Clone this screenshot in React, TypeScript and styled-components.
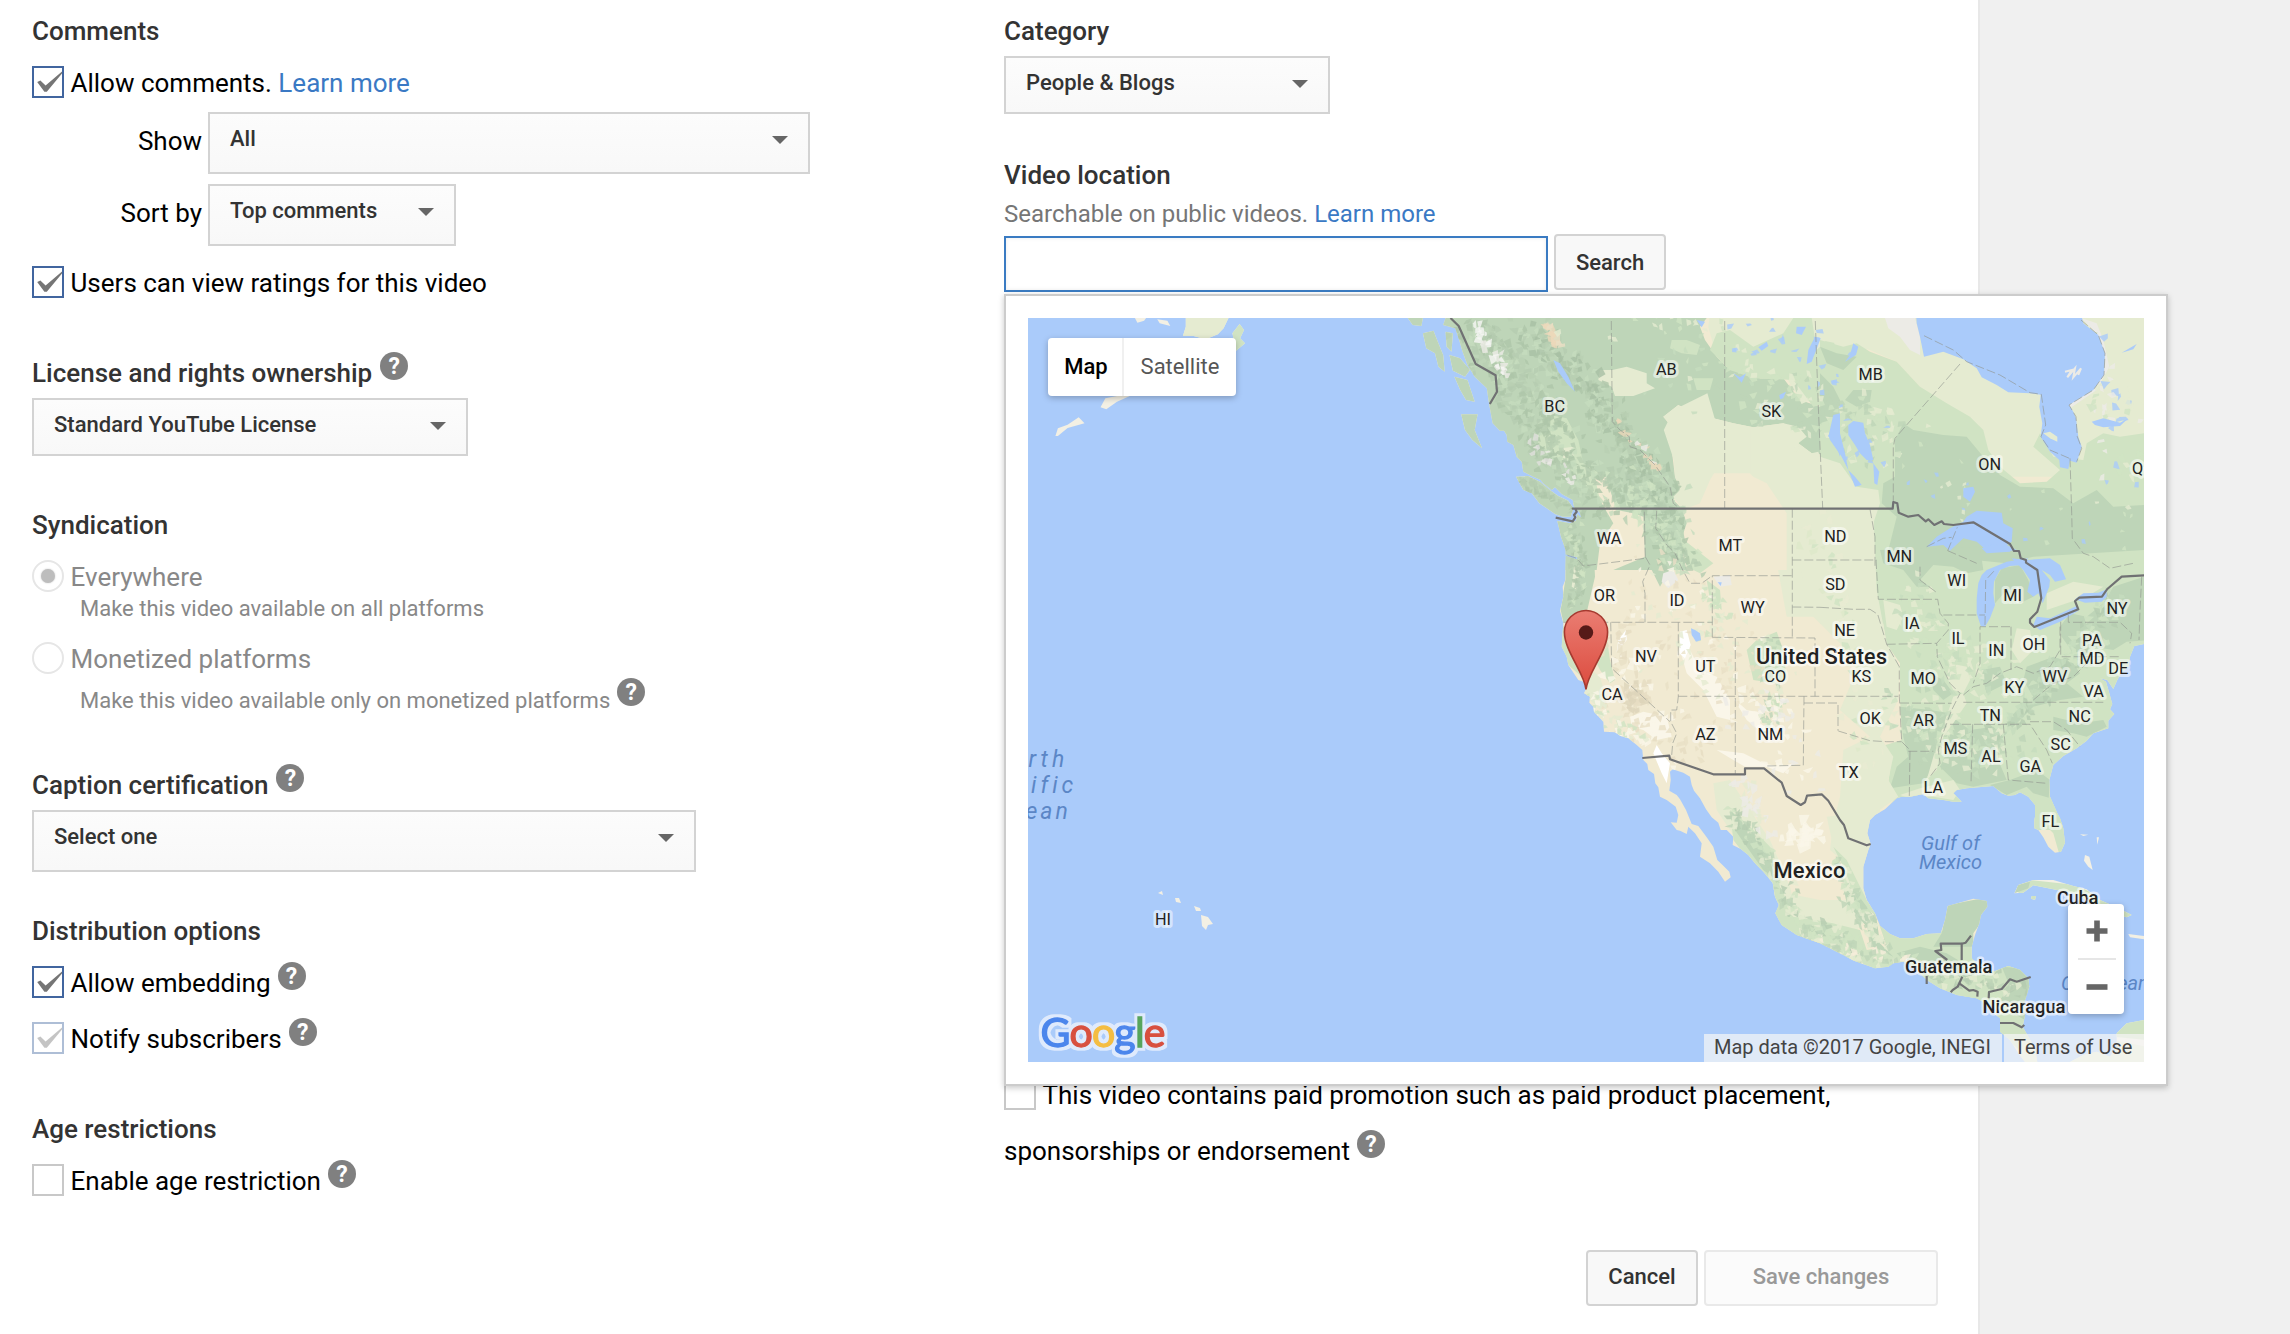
import React from "react";
import styled, { createGlobalStyle } from "styled-components";

const GlobalStyle = createGlobalStyle`
  * { box-sizing: border-box; }
  body {
    margin: 0;
    background: #f0f0f0;
    font-family: Roboto, "Liberation Sans", sans-serif;
    overflow: hidden;
  }
`;

/* ---------- page layout ---------- */

const Page = styled.main`
  display: flex;
  width: 1980px;
  height: 1334px;
  padding: 16px 0 0 32px;
  background: #fff;
  border-right: 2px solid #e8e8e8;
`;

const LeftColumn = styled.div`
  width: 972px;
  flex: none;
`;

const RightColumn = styled.div`
  width: 934px;
  flex: none;
`;

const Section = styled.section<{ $gap?: number }>`
  display: flex;
  flex-direction: column;
  margin-top: ${(p) => p.$gap ?? 0}px;
`;

const Heading = styled.h3`
  display: flex;
  height: 30px;
  margin: 0;
  color: #333;
  font-size: 26px;
  font-weight: 500;
  line-height: 30px;
  white-space: nowrap;
`;

const HelpBadge = styled.span<{ $lift?: number }>`
  flex: none;
  width: 28px;
  height: 28px;
  margin: ${(p) => -(p.$lift ?? 6)}px 0 0 ${(p) => (p.$lift ? 7 : 8)}px;
  border-radius: 50%;
  background: #808080;
  color: #fff;
  font-size: 23px;
  font-weight: 700;
  line-height: 29px;
  text-align: center;
`;

/* ---------- form controls ---------- */

const OptionRow = styled.div<{ $gap?: number; $muted?: boolean }>`
  display: flex;
  align-items: flex-start;
  height: 32px;
  margin-top: ${(p) => p.$gap ?? 20}px;
  color: ${(p) => (p.$muted ? "#888" : "#000")};
  font-size: 26px;
  line-height: 34px;
  white-space: pre;
`;

const CheckBoxFrame = styled.span<{ $checked?: boolean; $faded?: boolean }>`
  flex: none;
  width: 32px;
  height: 32px;
  margin-right: 6.5px;
  border: 2px solid ${(p) => (p.$checked ? "#41659f" : "#c8c8c8")};
  background: #fff;
  opacity: ${(p) => (p.$faded ? 0.42 : 1)};

  svg {
    display: block;
    margin: -2px;
  }
`;

const RadioFrame = styled.span`
  display: grid;
  place-items: center;
  flex: none;
  width: 32px;
  height: 32px;
  margin-right: 6.5px;
  border: 2px solid #e6e6e6;
  border-radius: 50%;
`;

const RadioDot = styled.span`
  width: 14px;
  height: 14px;
  border-radius: 50%;
  background: #bdbdbd;
  box-shadow: 0 0 2px #c8c8c8;
`;

const Hint = styled.div<{ $gap: number }>`
  display: flex;
  height: 28px;
  margin: ${(p) => p.$gap}px 0 0 48px;
  color: #888;
  font-size: 22px;
  line-height: 30px;
  white-space: nowrap;
`;

const FieldRow = styled.div<{ $gap: number }>`
  display: flex;
  margin-top: ${(p) => p.$gap}px;
`;

const FieldLabel = styled.label`
  width: 170px;
  margin-right: 6px;
  color: #000;
  font-size: 26px;
  line-height: 58px;
  text-align: right;
`;

const SelectBox = styled.div<{ $width: number; $height?: number; $gap?: number }>`
  display: flex;
  justify-content: space-between;
  width: ${(p) => p.$width}px;
  height: ${(p) => p.$height ?? 58}px;
  margin-top: ${(p) => p.$gap ?? 0}px;
  padding: 10px 20px 0;
  border: 2px solid #d3d3d3;
  background: linear-gradient(#fcfcfc, #f8f8f8);
  color: #333;
  font-size: 22px;
  font-weight: 500;
  line-height: 29px;
`;

const Caret = styled.span`
  width: 16px;
  height: 8px;
  margin-top: 12px;
  background: #666;
  clip-path: polygon(0 0, 100% 0, 50% 100%);
`;

const Link = styled.a`
  color: #3a79c4;
`;

const Note = styled.p`
  height: 30px;
  margin: 9px 0 0;
  color: #767676;
  font-size: 24px;
  line-height: 30px;
  white-space: pre;
`;

const SearchRow = styled.div`
  position: relative;
  display: flex;
  gap: 6px;
  height: 58px;
  margin-top: 5px;
`;

const SearchInput = styled.input`
  width: 544px;
  height: 56px;
  margin: 2px 0 0;
  padding: 0 12px;
  border: 2px solid #3a7bc2;
  border-radius: 0;
  background: #fff;
  box-shadow: inset 0 0 4px rgba(0, 0, 0, 0.08);
  font: 24px Roboto, sans-serif;
  outline: none;
`;

const Button = styled.button<{ $width: number; $low?: boolean }>`
  width: ${(p) => p.$width}px;
  height: 56px;
  padding: ${(p) => (p.$low ? "2px 0 0" : "0 0 2px")};
  border: 2px solid #d3d3d3;
  border-radius: 4px;
  background: #f8f8f8;
  color: #333;
  font: 500 22px/48px Roboto, sans-serif;

  &:disabled {
    border-color: #e9e9e9;
    background: #fbfbfb;
    color: #999;
  }
`;

const Footer = styled.footer`
  display: flex;
  justify-content: flex-end;
  gap: 6px;
  margin-top: 84px;
`;

/* ---------- map popup ---------- */

const MapPopup = styled.div`
  position: absolute;
  top: 60px;
  left: 0;
  width: 1164px;
  height: 792px;
  padding: 22px;
  border: 2px solid #ccc;
  background: #fff;
  box-shadow: 0 2px 6px rgba(0, 0, 0, 0.22);
`;

const MapCanvas = styled.div`
  position: relative;
  width: 1116px;
  height: 744px;
  overflow: hidden;

  > svg {
    display: block;
  }
`;

const MapTypeBar = styled.div`
  position: absolute;
  top: 20px;
  left: 20px;
  display: flex;
  width: 188px;
  height: 58px;
  border-radius: 4px;
  background: #fff;
  box-shadow: 0 2px 6px rgba(0, 0, 0, 0.25);
  font-size: 22px;
  line-height: 57px;
`;

const MapType = styled.span<{ $active?: boolean }>`
  width: ${(p) => (p.$active ? 76 : 112)}px;
  padding-left: ${(p) => (p.$active ? 2 : 0)}px;
  border-right: ${(p) => (p.$active ? "2px solid #f0f0f0" : "none")};
  color: ${(p) => (p.$active ? "#000" : "#565656")};
  font-weight: ${(p) => (p.$active ? 500 : 400)};
  text-align: center;
`;

const ZoomBar = styled.div`
  position: absolute;
  right: 20px;
  bottom: 48px;
  display: flex;
  flex-direction: column;
  align-items: center;
  width: 56px;
  height: 110px;
  padding-left: 2px;
  border-radius: 4px;
  background: #fff;
  box-shadow: 0 2px 6px rgba(0, 0, 0, 0.25);
`;

const ZoomStep = styled.span`
  display: grid;
  place-items: center;
  width: 100%;
  height: 54px;
`;

const ZoomDivider = styled.span`
  width: 38px;
  height: 2px;
  background: #e6e6e6;
`;

const Attribution = styled.div`
  position: absolute;
  right: 0;
  bottom: 0;
  display: flex;
  gap: 2px;
  height: 28px;
  color: #444;
  font-size: 20px;
  line-height: 26px;
  white-space: nowrap;
`;

const Credit = styled.span<{ $width: number }>`
  width: ${(p) => p.$width}px;
  padding-left: 10px;
  background: rgba(245, 245, 245, 0.72);
`;

/* ---------- map geometry ---------- */

type Tile = [number, number, number, number];

/* Survey tiles: origin on the page and units per pixel on each axis. */
const NW: Tile = [990, 0, 2.063, 3];
const T1: Tile = [1500, 290, 3, 3];
const T2: Tile = [1820, 290, 3, 3];
const T3: Tile = [1500, 550, 3, 3];
const T4: Tile = [1820, 550, 3, 3];
const T5: Tile = [1700, 800, 3, 3];
const T6: Tile = [1680, 700, 3, 3];

const at = ([ox, oy, sx, sy]: Tile, src: string) =>
  src
    .trim()
    .split(/\s+/)
    .map((pair) => {
      const [x, y] = pair.split(",").map(Number);
      return `${(ox + x / sx).toFixed(1)},${(oy + y / sy).toFixed(1)}`;
    })
    .join(" ");

const MAINLAND = [
  at(NW, "940,954 935,975 960,985 968,1020 975,1055 985,1095 1000,1130 1025,1165 1030,1215 1037,1270 1052,1292"),
  at(T1, "12,422 20,435 22,455 40,465 50,500 65,515 70,545 100,560 122,570 130,580 155,600 165,592 185,612 218,630 222,650 240,668 248,700 246,740 255,745 258,710 250,690 232,672 228,692 210,700 172,693 183,740 197,780 198,840"),
  at(T3, "198,0 196,90 188,110 190,140 180,182 190,220 185,290 200,320 205,345 235,390 250,395 258,418 252,430 270,440 268,458 280,470 282,485 310,515 312,545 345,547 362,558 385,565 410,585 427,600 430,630 442,642 445,660 462,672 466,700 475,712 480,740 500,750 527,770 535,795 530,818 512,817 530,840"),
  at(T6, "0,392 20,402 25,380 45,400 65,430 60,470 90,490 115,515 135,545 152,532 148,515 130,497 112,480 100,440 80,412 55,378 35,372 18,330 0,298"),
  at(T3, "540,748 530,735 508,722 512,690 510,665 518,658 550,668 570,680 575,705 582,722 600,745 618,778 635,802 655,818 662,840"),
  at(T6, "122,390 140,390 160,410 158,435 182,447 205,465 225,490 250,515 278,548 285,590 297,615 286,640 305,675 350,705 420,730 490,765 522,782 585,805 625,800 640,790 670,785 700,800 740,840 780,865 830,885 890,895"),
  at(T5, "845,603 870,630 900,655 900,695 930,720 955,760 975,786 1012,786 1005,745 985,710 968,680 975,645 975,600 988,560 985,535 960,510 925,498 880,515 840,500 815,475 815,440 825,405 838,370 843,345 862,320 860,303 820,296 775,309 743,318 735,360 722,400 680,402 640,415 600,415 570,402 540,377 525,340 500,300 490,265 490,200 505,150 512,132"),
  at(T6, "562,400 570,360 585,345 615,328 650,295 665,290 690,290 730,282 745,295 790,300 820,305 845,305 820,280 830,270 860,265 895,262 940,258 965,280 985,287 1005,285"),
  at(T4, "600,727 625,740 645,765 645,800"),
  at(T5, "1003,60 1003,85 1015,90 1030,112 1045,140 1065,158 1083,155 1095,128 1090,85 1080,55"),
  at(T4, "712,790 690,740 688,690 700,645 730,618 770,595 800,572 820,550 865,535 865,512 883,492 870,478 877,462 868,430 858,395 840,385 862,390 880,417 892,390 903,370 925,350 930,320 943,288 972,282"),
  at(T2, "990,780 990,60"),
].join(" ");

const ISLANDS = [
  at(NW, "862,954 893,954 890,978 872,975"),
  at(NW, "893,1000 915,992 925,1030 935,1065 938,1115 925,1100 918,1060 900,1045"),
  at(NW, "940,995 955,1000 952,1055 942,1040"),
  at(NW, "948,1065 970,1075 990,1110 980,1130 955,1112"),
  at(NW, "958,1130 985,1140 1000,1205 982,1200 970,1170"),
  at(NW, "972,1243 1006,1243 1000,1290 1015,1345 995,1320 980,1290"),
  at(T1, "48,560 85,558 120,575 150,600 175,618 205,632 220,655 212,680 188,680 165,672 140,655 118,640 95,610 70,600"),
  at(T5, "943,280 955,255 1000,240 1060,240 1120,258 1160,268 1200,300 1250,322 1295,345 1280,352 1220,335 1170,305 1120,280 1060,268 1000,256 970,278"),
  at(T5, "1250,700 1280,670 1332,660 1345,786 1110,786 1150,765 1190,755 1230,770 1250,740"),
  at(T5, "1285,402 1332,408 1332,418 1290,412"),
  at(T5, "995,288 1008,288 1005,300 993,296"),
  at(T5, "1155,165 1168,170 1178,210 1165,200 1152,182"),
  at(T5, "1190,112 1197,112 1192,134"),
  at(T5, "1140,103 1165,104 1150,108"),
  at(NW, "404,954 492,954 482,985 470,1003 445,1018 420,1008 398,1008 404,980"),
  at(NW, "500,1000 515,972 524,990 516,1015 526,1030 508,1052"),
  at(NW, "299,954 322,954 318,962 304,968"),
  at(NW, "345,958 366,962 372,978 350,970"),
  at(NW, "228,1222 238,1195 262,1188 292,1186 262,1205 240,1228"),
  at(NW, "135,1308 140,1285 160,1274 183,1252 195,1270 160,1284 140,1308"),
  "1158,893 1162,891 1163,895",
  "1175,898 1179,898 1181,903 1176,902",
  "1194,906 1200,908 1201,911 1196,911",
  "1201,915 1208,917 1213,924 1208,925 1206,930 1202,926",
];

const CREAM = "#f1ead2";
const PALE = "#e5ebd1";
const MID = "#d0e3c3";
const DEEP = "#bed5b8";
const RIDGE = "#aec5a9";
const SNOW = "#ecebe6";
const SAND = "#faf6e9";

const TERRAIN: [string, string][] = [
  [DEEP, at(T1, "-700,0 640,0 620,84 600,110 615,150 650,200 680,230 730,250 780,265 850,265 900,330 960,350 1020,350 1020,500 935,490 895,460 910,430 850,400 760,412 700,400 640,385 590,370 535,345 490,380 530,430 515,480 525,560 540,600 520,630 545,655 560,700 540,760 560,840 200,840 -700,840")],
  [PALE, at(T1, "640,0 1100,0 1100,84 1020,260 950,340 900,330 860,265 780,265 740,245 690,240 640,165 625,110")],
  [MID, at(T1, "690,120 760,170 850,130 880,84 935,84 950,180 1000,130 1020,330 940,350 880,270 760,265 690,240 630,180 650,130")],
  [PALE, at(T1, "490,380 535,345 560,365 600,370 640,385 700,400 760,412 850,400 895,410 920,440 895,460 935,490 955,485 970,530 1000,540 1060,530 1100,800 1100,980 860,980 800,655 545,655 520,620 540,600 525,560 520,490 535,430")],
  [PALE, at(T1, "337,240 380,230 440,250 440,280 465,295 400,318 345,318 335,290 295,270 300,240")],
  [MID, at(T1, "515,150 560,150 600,165 590,195 545,190 510,175")],
  [MID, at(T1, "580,265 640,265 630,300 590,300")],
  [MID, at(T1, "110,400 150,375 200,385 235,450 250,520 290,545 330,570 320,640 270,600 220,545 160,500 115,460")],
  [PALE, at(T1, "185,475 220,470 220,500 190,505")],
  [CREAM, at(T1, "600,640 630,570 660,520 720,520 760,560 800,580 840,640 860,670 860,840 560,840 570,700 550,660")],
  [CREAM, at(T1, "285,565 320,560 330,600 350,660 400,670 430,680 435,800 340,840 290,840 300,760 340,700 300,630")],
  [PALE, at(T2, "-20,60 972,60 972,460 850,470 780,520 700,560 560,560 500,480 430,400 300,290 230,215 150,180 0,150")],
  [SNOW, at(T2, "195,84 285,84 300,140 300,195 270,180 240,140 205,115")],
  [SNOW, at(T2, "783,84 830,100 850,150 868,230 830,300 750,355 745,345 820,300 852,255 855,190 835,135")],
  [MID, at(T2, "0,150 70,170 110,160 150,185 230,215 300,290 380,340 450,380 490,420 505,480 540,530 600,580 680,575 720,540 640,470 660,430 700,500 790,510 800,460 850,430 900,440 972,430 990,1000 0,1000")],
  [PALE, at(T2, "0,500 60,520 110,590 175,600 180,640 160,700 150,740 0,1000")],
  [DEEP, at(T2, "0,250 40,290 60,330 60,380 0,400")],
  [DEEP, at(T2, "100,300 155,300 150,335 110,350 75,330")],
  [DEEP, at(T2, "0,170 50,190 110,200 70,240 20,220")],
  [DEEP, at(T2, "225,450 250,400 280,420 370,435 440,440 490,500 540,555 600,590 700,595 760,640 830,600 880,650 972,645 990,880 820,880 650,800 560,880 320,840 200,800 230,680 185,640 190,580 225,560")],
  [MID, at(T4, "165,0 560,40 640,20 972,0 1000,300 1000,840 150,840 180,800 230,740 205,700 215,620 180,590 245,570 240,440 240,340 200,283 178,150")],
  [DEEP, at(T4, "180,0 480,-10 490,60 440,70 400,50 340,45 300,90 330,110 290,110 250,60 190,40")],
  [DEEP, at(T4, "545,55 600,45 625,90 640,140 600,160 560,120 525,160 525,90")],
  [PALE, at(T4, "190,150 240,165 250,200 230,240 200,230")],
  [PALE, at(T4, "590,235 630,240 640,300 600,340 575,300")],
  [PALE, at(T4, "390,340 440,350 450,390 430,430 400,420 380,380")],
  [PALE, at(T4, "680,130 760,95 850,110 800,140 740,160 680,180")],
  [DEEP, at(T4, "720,230 750,190 800,200 850,160 880,110 972,80 990,270 920,275 880,300 820,290 760,310 725,260")],
  [DEEP, at(T4, "620,350 700,320 760,340 780,370 740,400 790,440 720,450 640,470 580,530 550,560 570,500 640,440 610,390")],
  [DEEP, at(T4, "240,470 330,480 390,490 380,560 350,560 345,640 310,700 210,715 230,650 265,620 250,560")],
  [DEEP, at(T4, "395,500 450,540 520,530 550,560 530,620 560,690 460,710 410,700 360,650 385,600")],
  [DEEP, at(T4, "330,370 370,390 400,430 370,450 340,420")],
  [DEEP, at(T4, "480,360 540,350 560,400 500,430")],
  [DEEP, at(T4, "700,500 780,520 850,510 860,530 800,560 760,550 700,540")],
  [DEEP, at(T4, "570,690 650,660 690,690 685,760 660,750 620,710 560,735 510,705")],
  [PALE, at(T4, "400,440 430,430 440,460 400,520 370,560 350,660 320,690 340,620 365,540")],
  [PALE, at(T4, "240,735 300,715 400,690 420,720 400,750 340,740 260,742")],
  [PALE, at(T4, "-80,-120 160,-120 170,120 200,280 240,350 235,450 180,560 220,620 205,690 235,740 150,800 100,960 30,900 40,820 60,740 70,600 150,560 60,480 110,360 60,280 -40,180")],
  [DEEP, at(T3, "195,-30 280,-30 285,80 262,180 275,217 190,217 182,180 196,90")],
  [PALE, at(T3, "222,50 240,45 232,120 215,110")],
  [DEEP, at(T3, "440,-110 540,-110 560,0 520,40 480,110 455,60 440,0")],
  [MID, at(T3, "540,-40 590,0 640,40 600,70 560,50")],
  [MID, at(T3, "185,225 220,250 250,320 245,380 205,345 185,290")],
  [MID, at(T3, "275,245 320,260 330,330 345,390 330,400 300,360 270,300")],
  [PALE, at(T3, "250,340 300,380 320,450 300,480 260,440")],
  [SAND, at(T3, "390,500 430,485 500,500 515,560 470,570 430,540 395,530")],
  [SAND, at(T3, "560,250 570,300 600,360 650,380 690,450 690,510 650,500 610,420 560,370 540,300")],
  [SAND, at(T3, "700,445 740,480 790,490 780,520 840,560 800,560 740,510")],
  [SAND, at(T3, "650,600 730,610 790,640 840,650 880,640 850,670 800,650 735,650 700,630")],
  ["#fff", at(T3, "470,585 485,610 510,640 500,700 485,670 460,610")],
  ["#fff", at(T3, "378,240 380,270 350,305 355,270")],
  ["#fff", at(T3, "540,245 560,240 572,285 555,325 538,310")],
  [MID, at(T3, "770,270 830,245 850,300 860,390 820,400 760,390 740,300")],
  [MID, at(T3, "620,90 660,120 665,180 630,150")],
  [SNOW, at(T3, "490,70 520,60 535,90 505,115 485,95")],
  [SNOW, at(T3, "640,80 690,75 695,105 660,110")],
  [PALE, at(T6, "100,250 150,240 210,330 270,420 330,560 340,600 300,640 260,520 170,420 110,330")],
  [MID, at(T6, "150,330 200,370 270,440 300,560 340,640 300,700 280,560 230,510 160,420")],
  [DEEP, at(T6, "155,335 190,370 240,420 275,500 290,540 250,510 200,440 165,390")],
  [PALE, at(T6, "440,350 600,330 570,640 520,620 490,560 500,480 460,440")],
  [PALE, at(T6, "320,580 420,600 500,600 560,660 520,700 340,680")],
  [MID, at(T6, "290,600 340,650 440,665 540,690 560,750 620,740 590,650 530,600 490,500 460,440 500,480 560,600 620,680 720,700 780,690 1020,800 1020,900 800,900 600,830 400,760 280,680")],
  [DEEP, at(T6, "490,560 530,580 590,660 600,730 640,770 580,740 560,680 500,610")],
  [DEEP, at(T6, "650,760 720,740 800,760 850,790 860,830 760,840 690,800")],
  [DEEP, at(T5, "743,315 870,290 870,330 820,400 820,440 700,440 725,400")],
  [MID, at(T5, "820,480 1000,490 1000,786 900,700 850,610 780,590")],
  [DEEP, at(T5, "905,500 960,505 990,540 975,660 940,640 900,600 930,560")],
  [MID, at(T5, "940,235 1130,255 1300,345 1280,360 960,290")],
  [DEEP, at(T5, "943,280 955,255 990,245 985,265")],
  [PALE, at(T5, "960,720 1020,720 1030,790 960,790")],
  [MID, at(T5, "1200,650 1340,650 1340,720 1240,710")],
  [PALE, at(T5, "1100,740 1240,720 1340,740 1340,790 1100,790")],
  [MID, at(T5, "1000,-20 1070,0 1100,130 1080,170 1060,100 1020,60")],
  [PALE, at(NW, "390,940 500,940 490,1020 395,1030")],
  [MID, at(NW, "500,960 530,960 530,1060 500,1060")],
  [PALE, at(NW, "1410,1230 1480,1180 1500,1280 1568,1290 1568,1420 1420,1420 1390,1290")],
];

/* Small deterministic generator for the relief texture. */
const makeRandom = (seed: number) => () => {
  seed = (seed * 16807) % 2147483647;
  return seed / 2147483647;
};

type Relief = { spine: [number, number][]; spread: number; count: number; size: number; tones: string[] };

const RELIEF: Relief[] = [
  { spine: [[1475, 330], [1510, 370], [1535, 420], [1560, 460], [1610, 500]], spread: 34, count: 420, size: 6, tones: [RIDGE, RIDGE, "#b5ccb0", "#b9d0b3", "#c6dcbe"] },
  { spine: [[1530, 330], [1590, 390], [1640, 460], [1670, 510]], spread: 22, count: 360, size: 6, tones: [RIDGE, "#b5ccb0", "#a8bfa4", "#b9d0b3", "#c6dcbe"] },
  { spine: [[1475, 325], [1490, 350], [1505, 375]], spread: 8, count: 26, size: 6, tones: [SNOW, "#f6f6f4"] },
  { spine: [[1530, 440], [1550, 465], [1575, 480]], spread: 8, count: 18, size: 5, tones: [SNOW, "#e0e0dc"] },
  { spine: [[1545, 325], [1560, 345]], spread: 5, count: 16, size: 7, tones: ["#ecd8ba", "#eadfc4"] },
  { spine: [[1615, 420], [1640, 445], [1660, 470]], spread: 5, count: 16, size: 5, tones: ["#ecd8ba", SNOW, "#f3efe4"] },
  { spine: [[1620, 480], [1660, 520], [1685, 570]], spread: 28, count: 190, size: 6, tones: [RIDGE, MID, "#c6dcbe", "#b5ccb0"] },
  { spine: [[1575, 520], [1578, 560], [1575, 610]], spread: 12, count: 80, size: 5, tones: [RIDGE, "#b5ccb0", MID] },
  { spine: [[1520, 480], [1545, 495], [1570, 508]], spread: 6, count: 36, size: 5, tones: [RIDGE, "#b5ccb0"] },
  { spine: [[1600, 320], [1720, 330], [1690, 390]], spread: 60, count: 50, size: 5, tones: [MID, PALE, "#c6dcbe"] },
  { spine: [[1750, 380], [1840, 420], [1900, 440]], spread: 44, count: 120, size: 6, tones: [MID, DEEP, PALE] },
  { spine: [[1740, 330], [1830, 350], [1860, 470]], spread: 40, count: 34, size: 5, tones: ["#a9cbfa"] },
  { spine: [[1900, 460], [2000, 510], [2130, 530]], spread: 44, count: 36, size: 4, tones: ["#a9cbfa", MID, PALE] },
  { spine: [[2070, 330], [2110, 400], [2130, 480]], spread: 30, count: 60, size: 6, tones: [MID, PALE, "#a9cbfa", SNOW] },
  { spine: [[1640, 590], [1700, 640], [1760, 690]], spread: 60, count: 150, size: 5, tones: [PALE, "#ebe2c8", SAND, "#e9dfc6"] },
  { spine: [[1620, 640], [1640, 720], [1700, 740]], spread: 40, count: 110, size: 6, tones: ["#e9e0c6", SAND, "#e6dcc2"] },
  { spine: [[1770, 640], [1775, 700], [1765, 730]], spread: 12, count: 70, size: 5, tones: [MID, PALE, DEEP] },
  { spine: [[1710, 580], [1720, 620], [1690, 640]], spread: 14, count: 36, size: 5, tones: [MID, PALE] },
  { spine: [[1630, 690], [1640, 700]], spread: 14, count: 40, size: 6, tones: ["#ddd5ba", "#e6dcc2"] },
  { spine: [[1740, 700], [1780, 720], [1800, 770]], spread: 30, count: 60, size: 6, tones: [SAND, SNOW] },
  { spine: [[1730, 810], [1770, 860], [1800, 920], [1850, 940]], spread: 12, count: 130, size: 6, tones: [DEEP, MID, "#b5ccb0", PALE] },
  { spine: [[1740, 780], [1770, 840]], spread: 12, count: 34, size: 7, tones: [SNOW, PALE] },
  { spine: [[1790, 830], [1820, 840]], spread: 14, count: 24, size: 9, tones: [SAND] },
  { spine: [[1840, 860], [1850, 900], [1880, 940]], spread: 12, count: 80, size: 6, tones: [DEEP, MID, PALE] },
  { spine: [[1800, 935], [1850, 955], [1920, 965]], spread: 16, count: 120, size: 6, tones: [DEEP, MID, PALE, "#f6eedb"] },
  { spine: [[2000, 730], [2040, 690], [2080, 650], [2110, 600]], spread: 20, count: 150, size: 6, tones: ["#b5ccb0", MID, "#c6dcbe"] },
  { spine: [[1900, 700], [1950, 750], [2010, 740]], spread: 36, count: 150, size: 6, tones: [DEEP, MID, PALE, "#c6dcbe"] },
  { spine: [[1910, 580], [1940, 660], [2000, 670]], spread: 34, count: 110, size: 6, tones: [MID, PALE, "#c6dcbe"] },
  { spine: [[1930, 975], [1990, 980], [2020, 990]], spread: 14, count: 60, size: 6, tones: [DEEP, PALE, "#b5ccb0"] },
  { spine: [[1810, 530], [1850, 620], [1870, 760]], spread: 28, count: 60, size: 6, tones: [MID, "#dde8c9", "#e9ebd2"] },
  { spine: [[1585, 690], [1610, 720], [1640, 745]], spread: 12, count: 60, size: 5, tones: [MID, SAND, PALE] },
];

const shards = RELIEF.flatMap((band, bandIndex) => {
  const random = makeRandom(bandIndex * 977 + 41);
  return Array.from({ length: band.count }, () => {
    const t = random() * (band.spine.length - 1);
    const i = Math.floor(t);
    const [ax, ay] = band.spine[i];
    const [bx, by] = band.spine[i + 1];
    const cx = ax + (bx - ax) * (t - i) + (random() + random() - 1) * band.spread;
    const cy = ay + (by - ay) * (t - i) + (random() + random() - 1) * band.spread;
    const points = Array.from({ length: 4 }, (_, k) => {
      const angle = (k / 4) * Math.PI * 2 + random() * 1.3;
      const r = band.size * (0.25 + random() * 0.75);
      return `${(cx + Math.cos(angle) * r).toFixed(1)},${(cy + Math.sin(angle) * r).toFixed(1)}`;
    }).join(" ");
    return { points, fill: band.tones[Math.floor(random() * band.tones.length)] };
  });
});

const LAKES = [
  at(T2, "288,70 290,100 300,140 312,200 370,185 430,208 470,235 485,262 530,285 565,307 630,310 662,314 658,350 667,400 662,440 690,485 718,510 720,532 745,537 750,512 770,518 785,470 775,440 768,385 760,365 747,345 820,300 852,255 855,190 835,135 790,100 783,70"),
  at(T2, "85,405 100,393 130,398 135,430 150,465 160,510 140,510 120,490 105,465 85,435"),
  at(T2, "25,435 60,430 75,490 85,540 105,560 125,585 105,590 85,540 65,500 30,450"),
  at(T2, "160,520 178,545 172,585 163,580"),
  at(T2, "100,160 115,170 108,195 75,215 90,195"),
  at(T2, "430,595 460,590 465,605 450,635 430,620"),
  at(T2, "320,770 350,740 390,715 430,695 440,680 470,662 545,668 550,700 578,715 575,755 560,765 600,785 545,778 505,785 470,755 430,745 390,782 370,765"),
  at(T2, "815,395 850,385 900,398 925,385 900,408 850,412 825,405"),
  at(T2, "905,188 950,162 940,178"),
  at(T1, "160,210 180,220 205,260 225,305 200,280 175,245"),
  at(T1, "925,180 945,140 962,145 935,215 920,222"),
  at(T1, "890,110 918,110 905,135 888,130"),
  at(T1, "775,172 800,155 805,168 785,182"),
  at(T1, "700,250 720,262 738,250 725,278"),
  at(T1, "590,90 615,95 605,112"),
  at(T1, "838,315 858,305 850,325 840,328"),
  at(T1, "1000,375 1020,370 1020,500 1000,440 985,440"),
  at(T4, "470,145 475,100 485,75 500,60 560,35 625,25 610,45 570,48 540,60 522,95 520,130 525,165 510,205 495,230 482,228 470,190"),
  at(T4, "485,-5 520,-18 575,-5 570,5 500,10"),
  at(T4, "575,25 620,30 690,25 720,45 738,88 705,95 690,75 665,60 690,90 688,110 668,160 655,130 640,140 622,125 630,90 610,60"),
  at(T4, "640,225 650,200 690,205 770,168 775,182 720,215 660,240"),
  at(T4, "765,148 790,130 835,128 860,118 860,140 845,155 795,158"),
  at(T3, "573,235 585,240 600,250 603,270 588,275 575,255"),
  at(T3, "653,97 665,97 662,108"),
  at(T3, "190,12 230,22 232,28 200,18"),
  at(T5, "860,605 900,635 895,645 870,625"),
];

const BORDERS = [
  at(NW, "950,954 967,978 1002,1092 1043,1126 1046,1175 1031,1212"),
  `${at(T1, "167,683 218,694 226,682 222,675 230,665 226,656 218,656 1020,656")} ${at(T2, "218,656 220,636 232,640 236,668 265,680 295,675 317,694 325,688 343,705 365,694 372,702 400,705 460,697 570,762 582,783 597,783 602,805 618,810 618,818")} ${at(T4, "652,60 664,145 652,185 630,208 630,218 643,231 775,178 765,153 778,143 846,140 862,117 905,80 980,76")}`,
  `${at(T3, "427,624 508,617 510,628 640,673 735,673 735,655 792,655 845,698 860,738 902,765 915,757 921,737 965,733")} ${at(T6, "445,302 480,360 492,375 505,415 560,436 572,432")}`,
  at(T5, "742,480 706,453 724,450 722,431 785,431 785,480"),
  at(T5, "785,431 797,428 813,407"),
  at(T5, "680,528 680,552"),
  at(T5, "752,577 758,570 773,560 778,550 787,530"),
  at(T5, "778,550 808,572 820,570 833,575 832,590"),
  at(T5, "866,595 867,576 905,567 930,538 950,545 992,531"),
  at(T5, "900,669 940,669 965,682 973,675"),
];

const STATE_LINES = [
  at(T1, "334,93 337,395 360,420 388,440 390,470 420,480 465,525 510,590 520,640 540,656"),
  at(T1, "674,93 674,655"),
  at(T1, "946,93 955,350 968,655"),
  at(T1, "877,656 877,1040"),
  at(T1, "433,665 436,805 250,828 230,805 200,795"),
  at(T1, "470,662 467,715 500,765 525,790 548,840 570,880 605,880 637,857"),
  at(T2, "312,137 400,180 440,215 540,255 630,308 664,313 677,405 663,440 690,480 748,505"),
  at(T2, "783,90 835,135 855,190 852,255 820,300 747,345 768,380 772,440 785,475 770,515"),
  at(T2, "420,222 225,445 220,470 220,640"),
  at(T2, "750,505 755,670 757,745 790,790 820,800 870,835 940,820"),
  at(T2, "150,658 165,740 165,830"),
  at(T2, "320,770 370,745 395,742"),
  at(T2, "383,782 412,712"),
  at(T2, "383,782 470,820"),
  at(T3, "877,30 1130,30"),
  at(T3, "637,262 637,77 877,77"),
  at(T3, "637,262 945,264 945,439"),
  at(T3, "436,20 450,45 428,95 435,130 435,217"),
  at(T3, "190,217 637,217"),
  at(T3, "535,217 535,440 530,480 512,480 512,515 530,550 518,580 515,615"),
  at(T3, "332,217 335,355 510,515"),
  at(T3, "535,439 1195,439"),
  at(T3, "706,264 706,672"),
  at(T3, "912,439 910,646 795,648"),
  at(T3, "912,459 1014,459 1014,542"),
  at(T3, "877,171 960,172"),
  at(T4, "0,172 100,178 150,178 173,193 200,283 238,350 238,439 245,575 270,600 268,740"),
  at(T4, "55,543 150,572 200,575 245,575"),
  at(T4, "168,30 175,148 353,148 360,190 385,220 385,240 350,280 352,320 390,400 420,430 395,480 365,560 355,600 360,640 330,680"),
  at(T4, "200,283 350,280"),
  at(T4, "240,459 395,460"),
  at(T4, "265,604 340,604"),
  at(T4, "370,195 495,195"),
  at(T4, "570,230 480,230 480,340 460,400"),
  at(T4, "573,230 573,360"),
  at(T4, "720,230 720,300 690,350 640,370 590,350 540,370 500,400 460,410 430,435"),
  at(T4, "430,457 850,457"),
  at(T4, "390,523 630,523 680,600 697,640"),
  at(T4, "458,523 453,700"),
  at(T4, "550,523 565,690 680,700"),
  at(T4, "630,515 700,515 740,540 780,590"),
  at(T4, "722,215 722,320 900,320"),
  at(T4, "745,195 745,217 900,217 935,250 930,280"),
  at(T4, "965,80 960,180 957,270"),
  at(T4, "640,450 700,400 760,380 800,340"),
  at(T4, "300,50 300,90 353,130"),
  at(T4, "495,225 497,90 525,60"),
];

type StateLabel = [string, number, number];

const label = (tile: Tile, items: StateLabel[]): StateLabel[] =>
  items.map(([text, x, y]) => [text, tile[0] + x / tile[2], tile[1] + y / tile[3]]);

const STATES: StateLabel[] = [
  ...label(T1, [["BC", 164, 366], ["AB", 499, 256], ["SK", 814, 381], ["WA", 327, 762], ["MT", 691, 783]]),
  ...label(T2, [["MB", 152, 270], ["ON", 509, 540], ["Q", 953, 552], ["ND", 46, 756], ["MN", 238, 815]]),
  ...label(T3, [["OR", 313, 152], ["ID", 531, 168], ["WY", 758, 189], ["NV", 438, 336], ["UT", 616, 366], ["CO", 826, 396], ["CA", 336, 450], ["AZ", 616, 570], ["NM", 811, 570]]),
  ...label(T4, [
    ["SD", 46, 120], ["NE", 74, 258], ["KS", 124, 396], ["TX", 86, 684], ["OK", 151, 521], ["AR", 311, 528], ["LA", 340, 729],
    ["MS", 406, 612], ["AL", 513, 636], ["GA", 631, 666], ["SC", 722, 599], ["NC", 779, 515], ["VA", 821, 441], ["DE", 895, 372],
    ["MD", 816, 342], ["PA", 816, 288], ["NY", 891, 192], ["WV", 705, 396], ["OH", 642, 300], ["KY", 583, 429], ["IN", 529, 318],
    ["IL", 414, 283], ["MI", 578, 152], ["WI", 410, 108], ["IA", 276, 237], ["MO", 310, 402], ["TN", 511, 513],
  ]),
  ["FL", 2050.5, 827],
  ["HI", 1163, 925],
];

const StateText = styled.text`
  fill: #222;
  font-size: 16.3px;
  text-anchor: middle;
  paint-order: stroke;
  stroke: rgba(255, 255, 255, 0.5);
  stroke-width: 6px;
  stroke-linejoin: round;
`;

const CountryText = styled.text<{ $size: number }>`
  fill: #222;
  font-size: ${(p) => p.$size}px;
  font-weight: 500;
  paint-order: stroke;
  stroke: rgba(255, 255, 255, 0.6);
  stroke-width: 5px;
  stroke-linejoin: round;
`;

const WaterText = styled.text<{ $size?: number; $spacing?: number }>`
  fill: #5b86c6;
  font-size: ${(p) => p.$size ?? 20}px;
  font-style: italic;
  letter-spacing: ${(p) => p.$spacing ?? 0}px;
`;

const LogoText = styled.text`
  font-family: Lato, Roboto, sans-serif;
  font-size: 41px;
  font-weight: 400;
  stroke-width: 1.3px;
`;

const LOGO: [string, string][] = [["G", "#4c86ec"], ["o", "#d8503f"], ["o", "#f4bd42"], ["g", "#4c86ec"], ["l", "#58a55c"], ["e", "#d8503f"]];

const MapDrawing = () => (
  <svg width="1116" height="744" viewBox="1028 318 1116 744">
    <defs>
      <clipPath id="land">
        <polygon points={MAINLAND} />
        {ISLANDS.map((points) => (
          <polygon key={points} points={points} />
        ))}
      </clipPath>
      <linearGradient id="pin" x1="0" y1="0" x2="0" y2="1">
        <stop offset="0" stopColor="#ea7d72" />
        <stop offset="1" stopColor="#dc4b3e" />
      </linearGradient>
      <filter id="logo-halo" x="-10%" y="-20%" width="120%" height="140%" colorInterpolationFilters="sRGB">
        <feMorphology in="SourceAlpha" operator="dilate" radius="2.6" result="grown" />
        <feFlood floodColor="#dfeafc" />
        <feComposite in2="grown" operator="in" result="halo" />
        <feMerge>
          <feMergeNode in="halo" />
          <feMergeNode in="SourceGraphic" />
        </feMerge>
      </filter>
    </defs>
    <rect x="1028" y="318" width="1116" height="744" fill="#aacbfa" />
    <polygon points={MAINLAND} fill={CREAM} />
    {ISLANDS.map((points) => (
      <polygon key={points} points={points} fill="#f3f0e4" />
    ))}
    <g clipPath="url(#land)">
      {TERRAIN.map(([fill, points], i) => (
        <polygon key={i} points={points} fill={fill} />
      ))}
      {shards.map((s, i) => (
        <polygon key={i} points={s.points} fill={s.fill} opacity="0.8" />
      ))}
    </g>
    {LAKES.map((points) => (
      <polygon key={points} points={points} fill="#aacbfa" />
    ))}
    <polygon points={at(T2, "670,430 690,425 712,440 712,455 690,445")} fill={PALE} />
    <polyline points={at(T2, "735,245 755,240 742,262 765,235 760,262 783,235 775,255")} fill="none" stroke="#ecebe6" strokeWidth="2" />
    <g fill="none" stroke="#8f958e" strokeOpacity="0.62" strokeWidth="1" strokeDasharray="9 3">
      {STATE_LINES.map((points) => (
        <polyline key={points} points={points} />
      ))}
    </g>
    <g fill="none" stroke="#707173" strokeWidth="2.2" strokeLinejoin="round">
      {BORDERS.map((points) => (
        <polyline key={points} points={points} />
      ))}
    </g>
    {STATES.map(([text, x, y]) => (
      <StateText key={text} x={x} y={y}>{text}</StateText>
    ))}
    <CountryText $size={22} x="1756" y="663.5" textLength="131">United States</CountryText>
    <CountryText $size={22} x="1773.5" y="878" textLength="72">Mexico</CountryText>
    <CountryText $size={18.5} x="2057" y="904" textLength="41.5">Cuba</CountryText>
    <CountryText $size={18.5} x="1905" y="973.3" textLength="87.5">Guatemala</CountryText>
    <CountryText $size={18.5} x="1982.5" y="1013.3" textLength="83">Nicaragua</CountryText>
    <WaterText x="1921" y="850" textLength="59">Gulf of</WaterText>
    <WaterText x="1919" y="869.3" textLength="63">Mexico</WaterText>
    <WaterText x="2061" y="990">Caribbean</WaterText>
    <WaterText $size={23} $spacing={4} x="1028.5" y="766.5">rth</WaterText>
    <WaterText $size={23} $spacing={4} x="1031" y="792.5">ific</WaterText>
    <WaterText $size={23} $spacing={3} x="1025.5" y="818.5">ean</WaterText>
    <path
      d="M1586 689.5 C1584.5 673 1564.4 651 1564.4 632 A21.6 21.6 0 0 1 1607.6 632 C1607.6 651 1587.5 673 1586 689.5 Z"
      fill="url(#pin)"
      stroke="#a63a30"
      strokeWidth="1.6"
    />
    <circle cx="1586" cy="632.5" r="7.2" fill="#561a18" />
    <g filter="url(#logo-halo)">
      <LogoText x="1040.5" y="1047" textLength="125">
        {LOGO.map(([letter, fill], i) => (
          <tspan key={i} fill={fill} stroke={fill}>{letter}</tspan>
        ))}
      </LogoText>
    </g>
  </svg>
);

/* ---------- composed parts ---------- */

const Check = ({ checked, faded }: { checked?: boolean; faded?: boolean }) => (
  <CheckBoxFrame $checked={checked} $faded={faded}>
    {checked && (
      <svg width="32" height="32" viewBox="0 0 32 32">
        <path d="M5.2 16 L8.4 14.4 L13.6 19.6 L30 5.4 V7.6 L14.8 25.8 H12.4 Z" fill="#757575" />
      </svg>
    )}
  </CheckBoxFrame>
);

const Help = ({ lift }: { lift?: number }) => <HelpBadge $lift={lift}>?</HelpBadge>;

const Select = ({ value, width, height, gap }: { value: string; width: number; height?: number; gap?: number }) => (
  <SelectBox $width={width} $height={height} $gap={gap}>
    {value}
    <Caret />
  </SelectBox>
);

const LocationMap = () => (
  <MapPopup>
    <MapCanvas>
      <MapDrawing />
      <MapTypeBar>
        <MapType $active>Map</MapType>
        <MapType>Satellite</MapType>
      </MapTypeBar>
      <ZoomBar>
        <ZoomStep>
          <svg width="22" height="22" viewBox="0 0 22 22">
            <path d="M11 0.5v21M0.5 11h21" stroke="#666" strokeWidth="5.6" />
          </svg>
        </ZoomStep>
        <ZoomDivider />
        <ZoomStep>
          <svg width="22" height="22" viewBox="0 0 22 22">
            <path d="M0.5 11h21" stroke="#666" strokeWidth="5.6" />
          </svg>
        </ZoomStep>
      </ZoomBar>
      <Attribution>
        <Credit $width={298}>Map data ©2017 Google, INEGI</Credit>
        <Credit $width={140}>Terms of Use</Credit>
      </Attribution>
    </MapCanvas>
  </MapPopup>
);

export default function App() {
  return (
    <>
      <GlobalStyle />
      <Page>
        <LeftColumn>
          <Section>
            <Heading>Comments</Heading>
            <OptionRow>
              <Check checked />
              Allow comments. <Link>Learn more</Link>
            </OptionRow>
            <FieldRow $gap={14}>
              <FieldLabel>Show</FieldLabel>
              <Select value="All" width={602} height={62} />
            </FieldRow>
            <FieldRow $gap={10}>
              <FieldLabel>Sort by</FieldLabel>
              <Select value="Top comments" width={248} height={62} />
            </FieldRow>
            <OptionRow>
              <Check checked />
              Users can view ratings for this video
            </OptionRow>
          </Section>

          <Section $gap={60}>
            <Heading>License and rights ownership<Help /></Heading>
            <Select value="Standard YouTube License" width={436} gap={10} />
          </Section>

          <Section $gap={54}>
            <Heading>Syndication</Heading>
            <OptionRow $muted>
              <RadioFrame><RadioDot /></RadioFrame>
              Everywhere
            </OptionRow>
            <Hint $gap={2}>Make this video available on all platforms</Hint>
            <OptionRow $muted>
              <RadioFrame />
              Monetized platforms
            </OptionRow>
            <Hint $gap={12}>
              Make this video available only on monetized platforms
              <Help lift={8} />
            </Hint>
          </Section>

          <Section $gap={56}>
            <Heading>Caption certification<Help /></Heading>
            <Select value="Select one" width={664} height={62} gap={10} />
          </Section>

          <Section $gap={44}>
            <Heading>Distribution options</Heading>
            <OptionRow>
              <Check checked />
              Allow embedding<Help lift={4} />
            </OptionRow>
            <OptionRow $gap={24}>
              <Check checked faded />
              Notify subscribers<Help lift={4} />
            </OptionRow>
          </Section>

          <Section $gap={60}>
            <Heading>Age restrictions</Heading>
            <OptionRow>
              <Check />
              Enable age restriction<Help lift={4} />
            </OptionRow>
          </Section>
        </LeftColumn>

        <RightColumn>
          <Section>
            <Heading>Category</Heading>
            <Select value="People &amp; Blogs" width={326} gap={10} />
          </Section>

          <Section $gap={46}>
            <Heading>Video location</Heading>
            <Note>Searchable on public videos. <Link>Learn more</Link></Note>
            <SearchRow>
              <SearchInput aria-label="Video location" />
              <Button $width={112} $low>Search</Button>
              <LocationMap />
            </SearchRow>
          </Section>

          <Section $gap={766}>
            <OptionRow>
              <Check />
              This video contains paid promotion such as paid product placement,
            </OptionRow>
            <OptionRow $gap={24}>sponsorships or endorsement<Help lift={4} /></OptionRow>
          </Section>

          <Footer>
            <Button $width={112}>Cancel</Button>
            <Button $width={234} disabled>Save changes</Button>
          </Footer>
        </RightColumn>
      </Page>
    </>
  );
}
